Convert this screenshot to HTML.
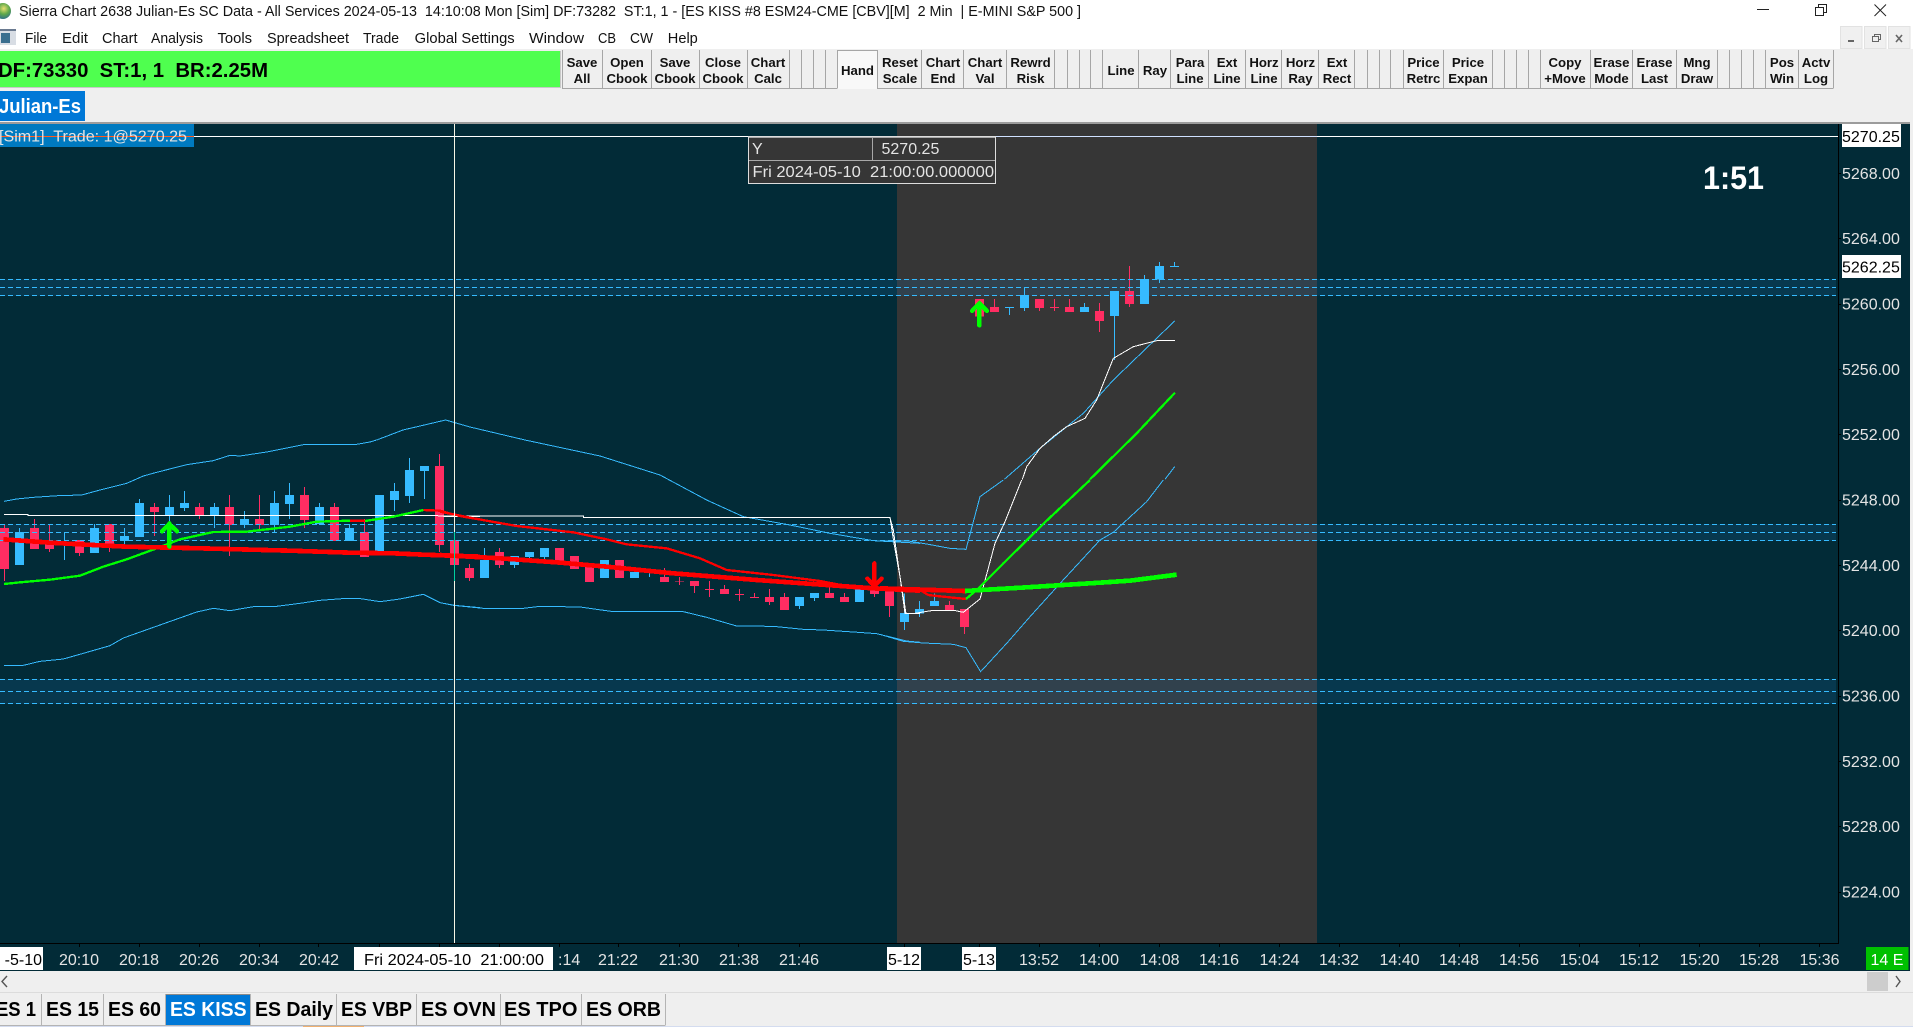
<!DOCTYPE html>
<html lang="en"><head><meta charset="utf-8"><title>Sierra Chart</title>
<style>
html,body{margin:0;padding:0;width:1913px;height:1027px;overflow:hidden;background:#efefef}
svg{display:block}
text{font-family:"Liberation Sans",sans-serif;white-space:pre}
.m{font-size:14.5px;fill:#111}
.b{font-size:13.2px;font-weight:700;fill:#111;text-anchor:middle}
.p{font-size:16px;fill:#e4e4e4}
.t{font-size:16px;fill:#e4e4e4;text-anchor:middle}
.k{font-size:20px;font-weight:700;fill:#000}
.l{fill:none;stroke:#36bbff;stroke-width:3}
.w{fill:none;stroke:#fff;stroke-width:3}
.pw{fill:none;stroke:#ff2d62;stroke-width:3}
.pb{fill:none;stroke:#ff2d62;stroke-width:27}
.bw{fill:none;stroke:#36bbff;stroke-width:3}
.bb{fill:none;stroke:#36bbff;stroke-width:27}
.rm{fill:none;stroke:#f00;stroke-width:7}
.rt{fill:none;stroke:#f00;stroke-width:14}
.gm{fill:none;stroke:#0f0;stroke-width:7}
.gt{fill:none;stroke:#0f0;stroke-width:14}
</style></head><body>
<svg xmlns="http://www.w3.org/2000/svg" width="1913" height="1027" viewBox="0 0 1913 1027">
<defs><radialGradient id="gl" cx=".55" cy=".35" r=".7"><stop offset="0" stop-color="#e8e070"/><stop offset=".5" stop-color="#5fa84a"/><stop offset="1" stop-color="#2a6a90"/></radialGradient></defs>
<rect width="1913" height="1027" fill="#efefef"/>
<rect width="1913" height="49" fill="#fff"/>
<circle cx="3" cy="11" r="8" fill="url(#gl)"/>
<text x="19" y="16" class="m" textLength="1062" lengthAdjust="spacingAndGlyphs">Sierra Chart 2638 Julian-Es SC Data - All Services 2024-05-13  14:10:08 Mon [Sim] DF:73282  ST:1, 1 - [ES KISS #8 ESM24-CME [CBV][M]  2 Min  | E-MINI S&amp;P 500 ]</text>
<g shape-rendering="crispEdges" fill="none" stroke="#222">
<path d="M1757 9.5H1769"/>
<path d="M1815.5 7.5H1823.5V15.5H1815.5ZM1818.5 7.5V4.5H1826.5V12.5H1823.5"/>
</g>
<path d="M1874.5 4.5L1886 16M1886 4.5L1874.5 16" stroke="#222" fill="none"/>
<rect x="0" y="30" width="16" height="15" fill="#d8dde4"/><rect x="1" y="33" width="9" height="10" fill="#3a6f8f"/><rect x="0" y="29" width="16" height="2" fill="#6a7a90"/>
<text x="25" y="43" class="m" textLength="22" lengthAdjust="spacingAndGlyphs">File</text>
<text x="62" y="43" class="m" textLength="26" lengthAdjust="spacingAndGlyphs">Edit</text>
<text x="102" y="43" class="m" textLength="35.5" lengthAdjust="spacingAndGlyphs">Chart</text>
<text x="151" y="43" class="m" textLength="52" lengthAdjust="spacingAndGlyphs">Analysis</text>
<text x="217.5" y="43" class="m" textLength="34.5" lengthAdjust="spacingAndGlyphs">Tools</text>
<text x="267" y="43" class="m" textLength="82" lengthAdjust="spacingAndGlyphs">Spreadsheet</text>
<text x="363" y="43" class="m" textLength="36" lengthAdjust="spacingAndGlyphs">Trade</text>
<text x="414.7" y="43" class="m" textLength="100" lengthAdjust="spacingAndGlyphs">Global Settings</text>
<text x="529" y="43" class="m" textLength="55" lengthAdjust="spacingAndGlyphs">Window</text>
<text x="598" y="43" class="m" textLength="18" lengthAdjust="spacingAndGlyphs">CB</text>
<text x="630" y="43" class="m" textLength="23" lengthAdjust="spacingAndGlyphs">CW</text>
<text x="667.8" y="43" class="m" textLength="30" lengthAdjust="spacingAndGlyphs">Help</text>
<g shape-rendering="crispEdges">
<rect x="1840.5" y="26.5" width="21.5" height="22" fill="#f0f0f0" stroke="#e2e2e2"/>
<rect x="1864.5" y="26.5" width="21.5" height="22" fill="#f0f0f0" stroke="#e2e2e2"/>
<rect x="1888.5" y="26.5" width="21.5" height="22" fill="#f0f0f0" stroke="#e2e2e2"/>
<rect x="1848" y="40" width="6" height="2" fill="#666"/>
<path d="M1872.5 36.5h6v5h-6zM1874.5 36.5v-2h6v5h-2" fill="none" stroke="#666"/>
</g>
<path d="M1896 35L1902 42M1902 35L1896 42" stroke="#666" stroke-width="1.6" fill="none"/>
<!-- top panel -->
<rect x="0" y="49" width="1913" height="73" fill="#efefef"/>
<rect x="0" y="51" width="560" height="36" fill="#4fff4f"/>
<path d="M0 87.5H560M560.5 51V88" stroke="#c8c8c8" fill="none" shape-rendering="crispEdges"/>
<text x="-2" y="77" class="k" textLength="270" lengthAdjust="spacingAndGlyphs">DF:73330  ST:1, 1  BR:2.25M</text>
<rect x="837" y="50" width="40" height="39" fill="#f8f8f8"/>
<path d="M562.5 50V88.5M602.5 50V88.5M651.5 50V88.5M699.5 50V88.5M747.5 50V88.5M789.5 50V88.5M801.5 50V88.5M813.5 50V88.5M825.5 50V88.5M837.5 50V88.5M877.5 50V88.5M921.5 50V88.5M963.5 50V88.5M1006.5 50V88.5M1054.5 50V88.5M1067.5 50V88.5M1079.5 50V88.5M1090.5 50V88.5M1102.5 50V88.5M1138.5 50V88.5M1170.5 50V88.5M1208.5 50V88.5M1245.5 50V88.5M1281.5 50V88.5M1318.5 50V88.5M1354.5 50V88.5M1367.5 50V88.5M1379.5 50V88.5M1390.5 50V88.5M1403.5 50V88.5M1443.5 50V88.5M1492.5 50V88.5M1504.5 50V88.5M1516.5 50V88.5M1528.5 50V88.5M1540.5 50V88.5M1590.5 50V88.5M1632.5 50V88.5M1676.5 50V88.5M1717.5 50V88.5M1729.5 50V88.5M1741.5 50V88.5M1753.5 50V88.5M1765.5 50V88.5M1798.5 50V88.5M1833.5 50V88.5M562 88.5H837M877 88.5H1833M837 50.5H877" stroke="#a6a6a6" fill="none" shape-rendering="crispEdges"/>
<g>
<text x="582" y="67" class="b">Save</text><text x="582" y="83" class="b">All</text>
<text x="627" y="67" class="b">Open</text><text x="627" y="83" class="b">Cbook</text>
<text x="675" y="67" class="b">Save</text><text x="675" y="83" class="b">Cbook</text>
<text x="723" y="67" class="b">Close</text><text x="723" y="83" class="b">Cbook</text>
<text x="768" y="67" class="b">Chart</text><text x="768" y="83" class="b">Calc</text>
<text x="857.5" y="75" class="b">Hand</text>
<text x="900" y="67" class="b">Reset</text><text x="900" y="83" class="b">Scale</text>
<text x="943" y="67" class="b">Chart</text><text x="943" y="83" class="b">End</text>
<text x="985" y="67" class="b">Chart</text><text x="985" y="83" class="b">Val</text>
<text x="1030.5" y="67" class="b">Rewrd</text><text x="1030.5" y="83" class="b">Risk</text>
<text x="1121" y="75" class="b">Line</text>
<text x="1155" y="75" class="b">Ray</text>
<text x="1190" y="67" class="b">Para</text><text x="1190" y="83" class="b">Line</text>
<text x="1227" y="67" class="b">Ext</text><text x="1227" y="83" class="b">Line</text>
<text x="1264" y="67" class="b">Horz</text><text x="1264" y="83" class="b">Line</text>
<text x="1300.5" y="67" class="b">Horz</text><text x="1300.5" y="83" class="b">Ray</text>
<text x="1337" y="67" class="b">Ext</text><text x="1337" y="83" class="b">Rect</text>
<text x="1423.5" y="67" class="b">Price</text><text x="1423.5" y="83" class="b">Retrc</text>
<text x="1468" y="67" class="b">Price</text><text x="1468" y="83" class="b">Expan</text>
<text x="1565" y="67" class="b">Copy</text><text x="1565" y="83" class="b">+Move</text>
<text x="1611.5" y="67" class="b">Erase</text><text x="1611.5" y="83" class="b">Mode</text>
<text x="1654.5" y="67" class="b">Erase</text><text x="1654.5" y="83" class="b">Last</text>
<text x="1697" y="67" class="b">Mng</text><text x="1697" y="83" class="b">Draw</text>
<text x="1782" y="67" class="b">Pos</text><text x="1782" y="83" class="b">Win</text>
<text x="1816" y="67" class="b">Actv</text><text x="1816" y="83" class="b">Log</text>
</g>
<rect x="0" y="91" width="85" height="30" fill="#0078d7"/>
<text x="-1" y="113" font-size="20" font-weight="700" fill="#fff" textLength="82" lengthAdjust="spacingAndGlyphs">Julian-Es</text>
<!-- chart -->
<g shape-rendering="crispEdges">
<rect x="0" y="122" width="1910" height="2" fill="#9c9c9c"/>
<rect x="0" y="124" width="1910" height="847" fill="#022b37"/>
<rect x="897" y="124" width="420" height="819" fill="#363636"/>
<rect x="0" y="279" width="1836" height="17" fill="#1e6eaa" fill-opacity=".2"/>
<rect x="0" y="524" width="1836" height="17" fill="#1e6eaa" fill-opacity=".2"/>
<rect x="0" y="679" width="1836" height="25" fill="#1e6eaa" fill-opacity=".2"/>
<rect x="0" y="124" width="194" height="23" fill="#007ac0"/>

<g transform="translate(0 440) scale(.33333)">
<path class="pw" d="M13.5 253V423M103.5 237V327M148.5 252V336M238.5 300V348M328.5 252V336M463.5 189V288M598.5 189V237M688.5 165V348M778.5 165V270M913.5 141V264M1003.5 189V303M1093.5 237V351M1318.5 42V336M1408.5 372V423"/>
<path class="pb" d="M13.5 264V387M103.5 264V327M148.5 312V327M238.5 300V339M328.5 252V324M463.5 201V216M598.5 201V225M688.5 201V255M778.5 237V255M913.5 165V240M1003.5 201V303M1093.5 276V351M1318.5 78V315M1363.5 300V375M1408.5 384V414"/>
<path class="bw" d="M58.5 264V375M193.5 276V360M283.5 252V339M373.5 264V312M418.5 177V291M508.5 165V320M553.5 153V213M643.5 189V264M733.5 213V264M823.5 153V276M868.5 129V237M958.5 189V255M1048.5 252V303M1138.5 165V335M1183.5 129V213M1228.5 54V189M1273.5 78V177"/>
<path class="bb" d="M58.5 276V375M283.5 264V339M373.5 288V303M418.5 189V291M508.5 201V225M553.5 189V204M643.5 201V225M733.5 237V255M823.5 189V255M868.5 165V192M958.5 201V252M1048.5 264V303M1138.5 165V335M1183.5 153V180M1228.5 90V168M1273.5 78V93"/>
</g>
<g transform="translate(440 500) scale(.33333)">
<path class="pw" d="M88.5 192V243M178.5 144V204M358.5 144V183M403.5 168V207M448.5 192V246M538.5 180V234M673.5 204V246M718.5 231V255M763.5 243V279M808.5 243V291M853.5 255V282M898.5 267V303M943.5 279V294M988.5 267V315M1033.5 279V330M1168.5 261V294M1213.5 279V306M1303.5 262V291M1348.5 270V351"/>
<path class="pb" d="M88.5 204V234M178.5 156V195M358.5 144V183M403.5 168V207M448.5 192V246M538.5 180V234M673.5 231V246M718.5 243V245M763.5 243V258M808.5 267V270M853.5 267V282M898.5 282V285M943.5 291V294M988.5 291V306M1033.5 291V330M1168.5 279V294M1213.5 291V306M1303.5 270V282M1348.5 273V318"/>
<path class="bw" d="M133.5 144V234M223.5 168V204M268.5 156V180M313.5 144V180M493.5 180V234M583.5 204V234M628.5 210V231M1078.5 291V327M1123.5 279V303M1258.5 267V306"/>
<path class="bb" d="M133.5 180V234M223.5 168V195M268.5 156V171M313.5 144V171M493.5 180V234M583.5 216V234M628.5 215V219M1078.5 291V318M1123.5 279V294M1258.5 267V306"/>
</g>
<g transform="translate(880 480) scale(.33333)">
<path class="bw" d="M73.5 340V450M118.5 363V411M163.5 340V378"/>
<path class="bb" d="M73.5 399V426M118.5 387V400M163.5 363V378"/>
<path class="pw" d="M208.5 363V390M253.5 387V462"/>
<path class="pb" d="M208.5 375V390M253.5 387V441"/>
</g>
<g transform="translate(880 240) scale(.33333)">
<path class="pw" d="M343.5 177V216M478.5 177V213M523.5 177V213M568.5 177V216M658.5 189V276M748.5 78V201"/>
<path class="pb" d="M298.5 177V230M343.5 201V216M478.5 177V204M523.5 201V204M568.5 201V216M658.5 213V243M748.5 153V192"/>
<path class="bw" d="M388.5 201V225M433.5 141V213M613.5 189V216M703.5 153V360M793.5 105V192M838.5 66V129M883.5 66V81"/>
<path class="bb" d="M388.5 201V204M433.5 165V204M613.5 201V216M703.5 153V228M793.5 117V192M838.5 78V118M883.5 78V81"/>
</g>
<!-- dashed zones -->
<path d="M0 279.5H1836M0 287.5H1836M0 295.5H1836M0 524.5H1836M0 532.5H1836M0 540.5H1836M0 679.5H1836M0 691.5H1836M0 703.5H1836" stroke="#36bbff" stroke-dasharray="5 3" fill="none"/>
</g>
<!-- overlay lines -->
<g shape-rendering="crispEdges">
<g transform="translate(0 440) scale(.33333)">
<polyline class="l" points="12,184 50,177 100,172 175,167 245,165 300,150 380,130 430,108 470,97 560,74 640,62 690,46 720,48 800,36 910,14 1030,13 1070,13 1110,6 1130,0"/>
<polyline class="l" points="12,676 70,676 120,664 190,657 250,640 330,617 370,594 480,555 590,516 640,505 690,512 760,500 830,499 900,490 960,481 1040,475 1075,475 1140,485 1200,477 1270,463 1320,488 1363,496 1440,503"/>
<polyline class="w" points="12,223 84,223 84,226 1300,226 1345,230 1440,229"/>
<polyline class="gm" points="12,432 60,427 150,419 240,407 310,380 380,358 470,325 540,298 640,276 740,275 870,260 950,245 1050,242"/>
<polyline class="rm" points="1050,242 1095,242"/>
<polyline class="gm" points="1095,243 1180,230 1270,210"/>
<polyline class="rm" points="1270,210 1320,212 1365,225 1400,232 1440,238"/>
<polyline class="rt" points="10,298 150,308 240,313 380,320 600,325 870,332 1050,338 1180,340 1270,344 1440,350"/>
<path d="M508 250V320M486 274L508 252L531 274" stroke="#0f0" stroke-width="13" fill="none" stroke-linecap="round"/>
</g>
<polyline fill="none" stroke="#36bbff" points="376.7,440 403,430 445.6,420 470,427 525,440 600,456 660,475 706.7,500"/>
<g transform="translate(440 500) scale(.33333)">
<polyline class="l" points="800,0 910,50 1050,75 1170,100 1300,122 1440,130"/>
<polyline class="l" points="0,308 40,316 130,325 250,325 300,319 420,321 520,335 730,335 800,352 890,378 1000,379 1090,388 1150,390 1240,396 1310,401 1400,423 1440,427"/>
<polyline class="w" points="0,48 430,48 430,52 1350,52 1362,130 1380,230 1398,340 1440,340"/>
<polyline class="rm" points="0,35 100,55 230,78 400,97 500,118 560,133 680,145 780,175 860,210 1000,225 1140,243 1240,262 1350,265 1440,270"/>
<polyline class="rt" points="0,165 180,175 350,187 500,200 700,220 950,240 1300,265 1440,272"/>
<path d="M1303 190V258M1282 236L1303 258L1325 236" stroke="#f00" stroke-width="13" fill="none" stroke-linecap="round"/>
</g>
<g transform="translate(880 480) scale(.33333)">
<polyline class="l" points="0,183 85,183 140,192 210,205 258,208 300,50 370,0"/>
<polyline class="l" points="0,463 70,484 130,489 220,493 258,503 302,575 380,490 450,410 545,305 660,180 700,157 800,65 850,0"/>
<polyline class="w" points="0,113 30,113 40,150 60,290 75,400 105,400 160,391 222,391 250,397 300,357 345,190 375,125 425,0"/>
<polyline class="rm" points="0,325 120,330 145,345 190,350 258,357"/>
<polyline class="gm" points="258,357 290,330 370,250 500,122 630,0"/>
<polyline class="rt" points="0,325 255,333"/>
<polyline class="gt" points="255,333 440,322 660,308 750,302 890,284"/>
</g>
<g transform="translate(880 240) scale(.33333)">
<polyline class="l" points="373,718 480,625 610,520 700,420 884,243"/>
<polyline class="l" points="855,718 884,680"/>
<polyline class="w" points="427,718 440,680 480,625 520,590 560,560 615,535 650,480 700,355 760,320 830,302 885,301"/>
<polyline class="gm" points="630,718 770,580 885,458"/>
<path d="M298 192V256M276 213L298 190L321 213" stroke="#0f0" stroke-width="13" fill="none" stroke-linecap="round"/>
</g>
<!-- crosshair -->
<path d="M454.5 124V943" stroke="#f6f6e6" fill="none"/>
<path d="M454.5 532V581" stroke="#00d0a0" fill="none"/>
<path d="M0 136.5H897" stroke="#fff" fill="none"/>
<path d="M897 136.5H1317" stroke="#cfe0ff" fill="none"/>
<path d="M1317 136.5H1838" stroke="#fff" fill="none"/>
<path d="M0 136.5H194" stroke="#ff5a1e" fill="none"/>
<!-- popup -->
<rect x="748.5" y="136.5" width="247" height="47" fill="#363636" stroke="#ddd"/>
<path d="M749 137.5H995M749 160.5H995M872.5 137V160" stroke="#a8a8a8" fill="none"/>
</g>
<text x="-1" y="141.5" class="p" textLength="188" lengthAdjust="spacingAndGlyphs">[Sim1]  Trade: 1@5270.25</text>
<text x="752" y="154" class="p">Y</text>
<text x="881.5" y="154" class="p">5270.25</text>
<text x="752.5" y="177" class="p" textLength="241.5" lengthAdjust="spacingAndGlyphs">Fri 2024-05-10  21:00:00.000000</text>
<text x="1703" y="189" font-size="32" font-weight="700" fill="#fff" textLength="61" lengthAdjust="spacingAndGlyphs">1:51</text>
<!-- axes -->
<g shape-rendering="crispEdges">
<path d="M1838.5 124V943M0 943.5H1839" stroke="#000" fill="none"/>
<path d="M1838 173.5h3M1838 238.5h3M1838 304.5h3M1838 369.5h3M1838 434.5h3M1838 500.5h3M1838 565.5h3M1838 630.5h3M1838 696.5h3M1838 761.5h3M1838 826.5h3M1838 892.5h3M79.5 943v4M139.5 943v4M199.5 943v4M259.5 943v4M318.5 943v4M379.5 943v4M439.5 943v4M499.5 943v4M559.5 943v4M618.5 943v4M679.5 943v4M738.5 943v4M799.5 943v4M904.5 943v4M979.5 943v4M1039.5 943v4M1099.5 943v4M1159.5 943v4M1219.5 943v4M1279.5 943v4M1339.5 943v4M1399.5 943v4M1459.5 943v4M1519.5 943v4M1579.5 943v4M1639.5 943v4M1699.5 943v4M1759.5 943v4M1819.5 943v4" stroke="#000" fill="none"/>
<rect x="1842" y="124" width="59" height="23" fill="#fff"/>
<rect x="1842" y="255" width="59" height="23" fill="#fff"/>
<rect x="0" y="947" width="43" height="23" fill="#fff"/>
<rect x="354" y="947" width="199" height="23" fill="#fff"/>
<rect x="887" y="947" width="34" height="23" fill="#fff"/>
<rect x="962" y="947" width="34" height="23" fill="#fff"/>
<rect x="1866" y="947" width="42.5" height="23" fill="#00c000"/>
</g>
<g>
<text x="1842" y="142" class="p" style="fill:#000">5270.25</text>
<text x="1842" y="179" class="p">5268.00</text>
<text x="1842" y="244" class="p">5264.00</text>
<text x="1842" y="272.5" class="p" style="fill:#000">5262.25</text>
<text x="1842" y="309.5" class="p">5260.00</text>
<text x="1842" y="375" class="p">5256.00</text>
<text x="1842" y="440" class="p">5252.00</text>
<text x="1842" y="505.5" class="p">5248.00</text>
<text x="1842" y="571" class="p">5244.00</text>
<text x="1842" y="636" class="p">5240.00</text>
<text x="1842" y="701.5" class="p">5236.00</text>
<text x="1842" y="767" class="p">5232.00</text>
<text x="1842" y="832" class="p">5228.00</text>
<text x="1842" y="897.5" class="p">5224.00</text>
</g>
<g>
<text x="42" y="965" font-size="16" fill="#000" text-anchor="end">-5-10</text>
<text x="79" y="965" class="t">20:10</text>
<text x="139" y="965" class="t">20:18</text>
<text x="199" y="965" class="t">20:26</text>
<text x="259" y="965" class="t">20:34</text>
<text x="319" y="965" class="t">20:42</text>
<text x="364" y="965" font-size="16" fill="#000" textLength="180" lengthAdjust="spacingAndGlyphs">Fri 2024-05-10  21:00:00</text>
<text x="558" y="965" class="p">:14</text>
<text x="618" y="965" class="t">21:22</text>
<text x="679" y="965" class="t">21:30</text>
<text x="739" y="965" class="t">21:38</text>
<text x="799" y="965" class="t">21:46</text>
<text x="904" y="965" font-size="16" fill="#000" text-anchor="middle">5-12</text>
<text x="979" y="965" font-size="16" fill="#000" text-anchor="middle">5-13</text>
<text x="1039" y="965" class="t">13:52</text>
<text x="1099" y="965" class="t">14:00</text>
<text x="1159.5" y="965" class="t">14:08</text>
<text x="1219" y="965" class="t">14:16</text>
<text x="1279.5" y="965" class="t">14:24</text>
<text x="1339" y="965" class="t">14:32</text>
<text x="1399.5" y="965" class="t">14:40</text>
<text x="1459" y="965" class="t">14:48</text>
<text x="1519" y="965" class="t">14:56</text>
<text x="1579.5" y="965" class="t">15:04</text>
<text x="1639" y="965" class="t">15:12</text>
<text x="1699.5" y="965" class="t">15:20</text>
<text x="1759" y="965" class="t">15:28</text>
<text x="1819.5" y="965" class="t">15:36</text>
<text x="1887" y="965" class="t" style="fill:#fff">14 E</text>
</g>
<!-- scrollbar + tabs -->
<g shape-rendering="crispEdges">
<rect x="0" y="992" width="1913" height="1" fill="#dcdcdc"/>
<rect x="1867" y="972" width="21" height="19" fill="#cdcdcd"/>
<path d="M1896 976L1900 981.5L1896 987" stroke="#555" fill="none" shape-rendering="auto" stroke-width="1.4"/>
<path d="M7 976L2 981.5L7 987" stroke="#555" fill="none" shape-rendering="auto" stroke-width="1.4"/>
<rect x="166" y="994" width="84.5" height="31" fill="#0078d7"/>
<rect x="166" y="994" width="84.5" height="1" fill="#8a8a8a"/>
<path d="M41.5 994V1025M103.5 994V1025M165.5 994V1025M250.5 994V1025M336.5 994V1025M416.5 994V1025M500.5 994V1025M581.5 994V1025M665.5 994V1025M0 1025.5H665.5" stroke="#b4b4b4" fill="none"/>
<rect x="0" y="1026" width="1913" height="1" fill="#d4dcef"/>
<rect x="303" y="1026" width="61" height="1" fill="#f0b070"/>
</g>
<text x="-4" y="1016" class="k" textLength="40" lengthAdjust="spacingAndGlyphs">ES 1</text>
<text x="46" y="1016" class="k" textLength="53" lengthAdjust="spacingAndGlyphs">ES 15</text>
<text x="108" y="1016" class="k" textLength="53" lengthAdjust="spacingAndGlyphs">ES 60</text>
<text x="170" y="1016" class="k" style="fill:#fff" textLength="76.5" lengthAdjust="spacingAndGlyphs">ES KISS</text>
<text x="255" y="1016" class="k" textLength="78" lengthAdjust="spacingAndGlyphs">ES Daily</text>
<text x="341" y="1016" class="k" textLength="71" lengthAdjust="spacingAndGlyphs">ES VBP</text>
<text x="421" y="1016" class="k" textLength="75" lengthAdjust="spacingAndGlyphs">ES OVN</text>
<text x="504" y="1016" class="k" textLength="73.5" lengthAdjust="spacingAndGlyphs">ES TPO</text>
<text x="586" y="1016" class="k" textLength="75" lengthAdjust="spacingAndGlyphs">ES ORB</text>
</svg>
</body></html>
